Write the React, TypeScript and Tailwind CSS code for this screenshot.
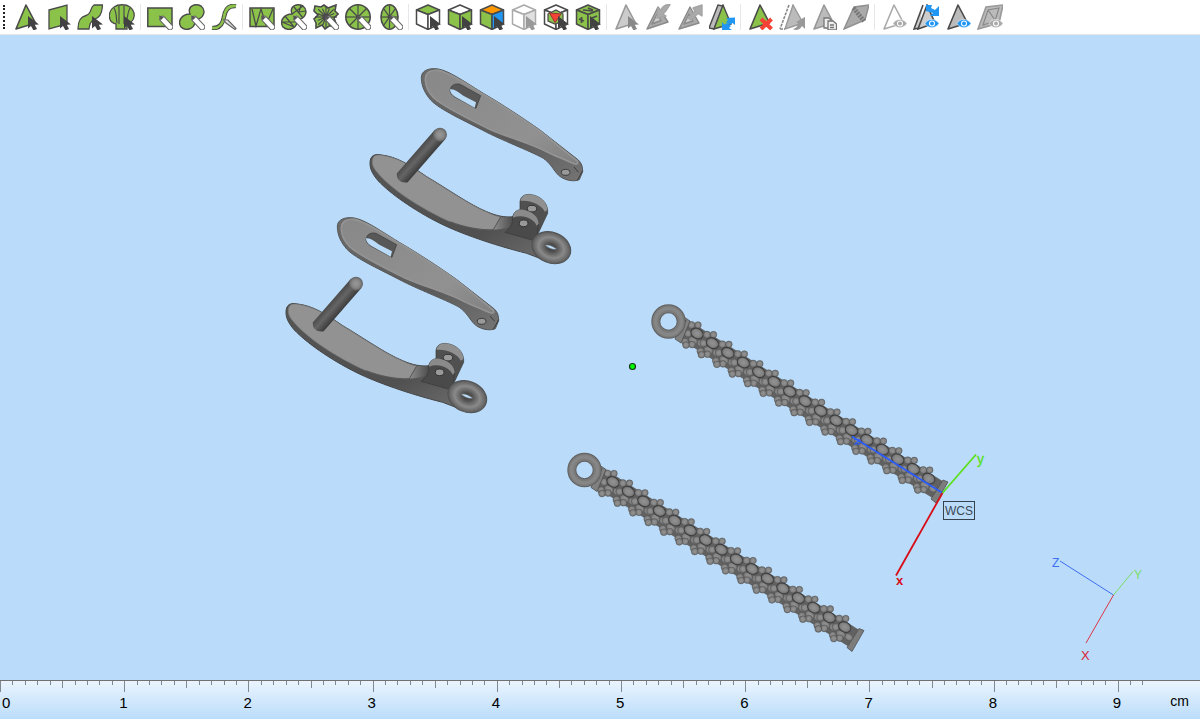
import { Fragment, type ReactNode } from 'react'

const GREEN = '#8bc34a'
const DARK = '#4a4a4a'

type Tool = { label: string; icon: ReactNode; disabled?: boolean }

function Cursor({ color = '#424242' }: { color?: string }) {
  return <path d="M15 12V24.5L18 22L20.500 26.500L24 25L21.800 20.700L26 20.500Z" fill={color} />
}

function Pencil() {
  return (
    <g>
      <path d="M15.500 15L23 23" stroke="#666" strokeWidth="6.500" strokeLinecap="round" />
      <path d="M15.500 15L23 23" stroke="#fff" strokeWidth="4.500" strokeLinecap="round" />
      <path d="M12 11.500L17 13L13.500 16.500Z" fill="#555" />
    </g>
  )
}

function Spokes({ cx, cy, rx, ry, turn = 0 }: { cx: number; cy: number; rx: number; ry: number; turn?: number }) {
  const angles = [0, 45, 90, 135].map((a) => ((a + turn) * Math.PI) / 180)
  return (
    <g stroke={DARK} strokeWidth="1.2">
      {angles.map((a) => (
        <line
          key={a}
          x1={cx - rx * Math.cos(a)}
          y1={cy - ry * Math.sin(a)}
          x2={cx + rx * Math.cos(a)}
          y2={cy + ry * Math.sin(a)}
        />
      ))}
    </g>
  )
}

function Cube({ top, left, right, line = DARK }: { top: string; left: string; right: string; line?: string }) {
  return (
    <g stroke={line} strokeWidth="1.5" strokeLinejoin="round">
      <path d="M13 1L24.500 6L13 10.500L1.500 6Z" fill={top} />
      <path d="M1.500 6L13 10.500V25.500L1.500 20Z" fill={left} />
      <path d="M24.500 6L13 10.500V25.500L24.500 20Z" fill={right} />
    </g>
  )
}

function Triangle({ fill = GREEN, line = DARK }: { fill?: string; line?: string }) {
  return <path d="M13 1L3 25L22.5 19Z" fill={fill} stroke={line} strokeWidth="1.6" strokeLinejoin="round" />
}

function Eye({ color }: { color: string }) {
  return (
    <g>
      <path d="M12 19.5C15 14 22.500 14 26 19.5C22.500 25 15 25 12 19.5Z" fill={color} stroke="#fff" strokeWidth=".5" />
      <circle cx="19" cy="19.5" r="3" fill="#fff" />
      <circle cx="19" cy="19.5" r="2" fill={color} />
    </g>
  )
}

const dumbbell = 'M11 10C8 2 16 -1 22 2C28 7 24 16 16 15C16 15 15 16 16 18C15 26 6 27 2 23C-2 17 3 10 11 10Z'

const groups: Tool[][] = [
  [
    { label: 'Select triangles', icon: <><Triangle /><Cursor /></> },
    { label: 'Select planes', icon: <><path d="M4 6L22 1V20L4 25Z" fill={GREEN} stroke={DARK} strokeWidth="1.3" /><Cursor /></> },
    { label: 'Select surfaces', icon: <><path d="M17 1H25.5C25 11 22 14 17 15.5C14 17 12.5 20 12 25H1C1 17 3 13 9 11.5C15 10 13 3 17 1Z" fill={GREEN} stroke={DARK} strokeWidth="1.3" /><Cursor /></> },
    {
      label: 'Select shells',
      icon: (
        <>
          <path d="M7 25V20C-2 18 -1 7 5 3C9 0 17 0 21 3C27 8 27 17 18 20V25Z" fill={GREEN} stroke={DARK} strokeWidth="1.3" />
          <path d="M5 4C8 9 7 14 8 19M10 2V20M15 2V20M21 4C18 9 19 14 17 19" fill="none" stroke={DARK} strokeWidth="1.2" />
          <Cursor />
        </>
      ),
    },
  ],
  [
    { label: 'Rectangle selection', icon: <><path d="M.8 4H25V22.5H.8Z" fill={GREEN} stroke={DARK} strokeWidth="1.5" /><Pencil /></> },
    { label: 'Freeform selection', icon: <><path d={dumbbell} fill={GREEN} stroke={DARK} strokeWidth="1.4" /><Pencil /></> },
    {
      label: 'Polyline selection',
      icon: (
        <>
          <path d="M1 24C10 25 12 18 13 13C14 6 17 1 25 2" fill="none" stroke={DARK} strokeWidth="4.500" />
          <path d="M1 24C10 25 12 18 13 13C14 6 17 1 25 2" fill="none" stroke={GREEN} strokeWidth="2.500" />
          <path d="M12.500 15.500L17 16L25 24.500L24 25.500L15 19Z" fill="#ddd" stroke="#666" strokeWidth="1.2" />
        </>
      ),
    },
  ],
  [
    {
      label: 'Rectangle through selection',
      icon: (
        <>
          <path d="M1 4H25V22.5H1Z" fill={GREEN} stroke={DARK} strokeWidth="1.5" />
          <path d="M3 5L7 22L12 5L17 21L24 5" fill="none" stroke={DARK} strokeWidth="1.3" />
          <Pencil />
        </>
      ),
    },
    {
      label: 'Freeform through selection',
      icon: (
        <>
          <path d={dumbbell} fill={GREEN} stroke={DARK} strokeWidth="1.4" />
          <path d="M13 3L22 14M18 8L20 1M18 8L25 7M11 10L22 2M1 18L13 23M1 18L15 18M4 12L13 23" fill="none" stroke={DARK} strokeWidth="1.2" />
          <Pencil />
        </>
      ),
    },
    {
      label: 'Star selection',
      icon: (
        <>
          <path d="M2 2L8 3L11 1L15 4L23 1L22 7L25 10L21 14L24 22L16 22L12 25L9 21L3 24L3 19L1 15L5 11L1 7Z" fill={GREEN} stroke={DARK} strokeWidth="1.6" />
          <Spokes cx={13} cy={13} rx={11} ry={11} />
          <Spokes cx={13} cy={13} rx={9} ry={9} turn={22} />
          <circle cx="13" cy="13" r="3.500" fill={DARK} />
          <Pencil />
        </>
      ),
    },
    {
      label: 'Circle selection',
      icon: <><circle cx="13" cy="13" r="12.200" fill={GREEN} stroke={DARK} strokeWidth="1.6" /><Spokes cx={13} cy={13} rx={12} ry={12} /><circle cx="13" cy="13" r="2" fill={DARK} /><Pencil /></>,
    },
    {
      label: 'Ellipse selection',
      icon: <><ellipse cx="12.500" cy="13" rx="8.500" ry="12.200" fill={GREEN} stroke={DARK} strokeWidth="1.6" /><Spokes cx={12.5} cy={13} rx={8} ry={11.5} /><circle cx="12.500" cy="13" r="2" fill={DARK} /><Pencil /></>,
    },
  ],
  [
    { label: 'Top view', icon: <><Cube top={GREEN} left="#fff" right="#fff" /><Cursor /></> },
    { label: 'Side view', icon: <><Cube top="#fff" left={GREEN} right={GREEN} /><Cursor /></> },
    { label: 'Coloured faces', icon: <><Cube top="#ff9800" left={GREEN} right="#2196f3" /><Cursor /></> },
    { label: 'Hidden part', disabled: true, icon: <><Cube top="#fff" left="#fff" right="#e0e0e0" line="#aaa" /><Cursor color="#999" /></> },
    {
      label: 'Inner part',
      icon: (
        <>
          <Cube top="#fff" left="#fff" right="#fff" />
          <path d="M5 10L13 6L20 10V17L12 20L5 17Z" fill={GREEN} stroke={DARK} strokeWidth="1.2" />
          <path d="M6.500 9L18 10L12 18.500Z" fill="#f44336" stroke="#933" />
          <Cursor />
        </>
      ),
    },
    {
      label: 'Whole part',
      icon: (
        <>
          <Cube top={GREEN} left={GREEN} right={GREEN} />
          <path d="M8 6L18 7M13 4L18 6" stroke={DARK} strokeWidth="1.6" />
          <path d="M4 15L9 17M6.500 13V19M17 14L22 12" stroke={DARK} strokeWidth="1.8" />
          <Cursor />
        </>
      ),
    },
  ],
  [
    { label: 'Mark triangle', disabled: true, icon: <><Triangle fill="#ccc" line="#999" /><Cursor color="#888" /></> },
    {
      label: 'Shrink selection',
      disabled: true,
      icon: (
        <g stroke="#8a8a8a" strokeWidth="1.4" strokeLinejoin="round">
          <path d="M13 3L2 25L23 18Z" fill="#aaa" />
          <path d="M12 10L7 20L16 16.5Z" fill="#ccc" />
          <path d="M12 14L13 4L15.500 6C18 2 20 .5 25 .5C22 5 21 8 18 10L21 12Z" fill="#aaa" stroke="#a5a5a5" />
        </g>
      ),
    },
    {
      label: 'Grow selection',
      disabled: true,
      icon: (
        <g stroke="#8a8a8a" strokeWidth="1.4" strokeLinejoin="round">
          <path d="M13 3L2 25L22 19Z" fill="#aaa" />
          <path d="M12 10L7 20L16 17Z" fill="#ccc" />
          <path d="M11 14L18 7L16 4L25 1V12L21 9.500L14 16Z" fill="#aaa" stroke="#a5a5a5" />
        </g>
      ),
    },
    {
      label: 'Invert selection',
      icon: (
        <>
          <path d="M9 1L0 24L5 25L14 2Z" fill="#bbb" stroke={DARK} strokeWidth="1.4" />
          <path d="M14 1L5 25L22 20Z" fill={GREEN} stroke={DARK} strokeWidth="1.4" />
          <path d="M17 14L26 13.500V21L23.500 19L21 21L17 18L19 16Z" fill="#2196f3" />
          <path d="M13 18L15.500 20.500L18 19L22 22L20 24L23 26H13Z" fill="#2196f3" />
        </>
      ),
    },
  ],
  [
    { label: 'Delete marked', icon: <><Triangle /><path d="M14 15L24.500 25M24.500 15L14 25" stroke="#f44336" strokeWidth="4" /></> },
    {
      label: 'Move marked',
      disabled: true,
      icon: (
        <>
          <path d="M10 1L1 25M1 25H6" stroke="#888" strokeWidth="1.6" strokeDasharray="3 1" />
          <path d="M14 1L6 25L24 19Z" fill="#bbb" stroke="#999" strokeWidth="1.4" />
          <path d="M14 25C18 24 19 21 19 19L17 18L26 13V25L23 22C21 26 17 27 14 25Z" fill="#999" />
        </>
      ),
    },
    {
      label: 'Copy marked',
      disabled: true,
      icon: <><Triangle fill="#bbb" line="#999" /><g fill="#eee" stroke="#777" strokeWidth="1.3"><path d="M13 14H18L20 16V24H13Z" /><path d="M17 17H22L25.500 20V26H17Z" /><path d="M19 21H23M19 23.500H23" /></g></>,
    },
    {
      label: 'Stitch marked',
      disabled: true,
      icon: <><path d="M1 25L11 3L26 1L22 16Z" fill="#aaa" stroke="#8f8f8f" strokeWidth="1.4" /><path d="M10.500 4L21 17" stroke="#777" strokeWidth="4.500" strokeDasharray="2 1" /></>,
    },
  ],
  [
    { label: 'Hide marked', disabled: true, icon: <><Triangle fill="#fff" line="#aaa" /><Eye color="#aaa" /></> },
    {
      label: 'Invert visibility',
      icon: (
        <>
          <path d="M10 1L1 25L6 24M14 1L5 25L22 19Z" fill="#ccc" stroke={DARK} strokeWidth="1.6" />
          <path d="M13 1H19L18 4L22 6L26 2V12H17L20 9L13 7Z" fill="#2196f3" />
          <Eye color="#2196f3" />
        </>
      ),
    },
    { label: 'Show marked', icon: <><Triangle fill="#bbb" /><Eye color="#2196f3" /></> },
    {
      label: 'Show all',
      disabled: true,
      icon: (
        <>
          <path d="M1 25L9 3L26 1L22 19Z" fill="#bbb" stroke="#999" strokeWidth="1.6" />
          <path d="M6 21L11 6L22 4L18 17ZM11 6L18 16" fill="#bbb" stroke="#888" strokeWidth="1.2" />
          <Eye color="#aaa" />
        </>
      ),
    },
  ],
]

function Toolbar() {
  return (
    <header className="flex h-[35px] items-center overflow-hidden border-b border-gray-200 bg-white">
      <div className="mr-[5px] ml-[3px] h-6 border-l-2 border-dotted border-[#222]" />
      {groups.map((tools, i) => (
        <Fragment key={i}>
          {i > 0 && <div className="mr-[3px] ml-[2px] h-[26px] w-px shrink-0 bg-gray-200" />}
          {tools.map((tool) => (
            <button key={tool.label} type="button" aria-label={tool.label} disabled={tool.disabled} className="flex h-8 w-8 shrink-0 items-center justify-center">
              <svg viewBox="0 0 26 26" className="h-[26px] w-[26px]" fill="none">
                {tool.icon}
              </svg>
            </button>
          ))}
        </Fragment>
      ))}
    </header>
  )
}

function Clasp() {
  return (
    <g transform="translate(360 55) scale(.3333)">
      {/* lever */}
      <path d="M184 70C182 45 210 38 235 42C270 48 320 85 370 115C430 150 490 190 540 225L655 315C665 324 668 335 668 350L658 374C640 382 610 375 595 360C580 345 572 325 550 310C520 292 440 262 380 232C320 200 240 165 212 135C195 115 185 95 184 70Z" fill="url(#side)" stroke="#555" strokeWidth="3" />
      <path d="M196 75C196 50 215 44 235 46C270 52 320 88 370 118C430 153 490 193 540 228L652 318C657 332 645 328 628 320C608 310 587 304 560 290C510 265 438 245 385 221C320 189 250 155 221 128C203 110 197 93 196 75Z" fill="url(#face)" stroke="#949494" strokeWidth="5" />
      <path d="M272 100C275 88 290 85 300 88L362 122L348 160L283 125C271 116 268 108 272 100Z" fill="#585858" stroke="#3a3a3a" strokeWidth="2" />
      <path d="M270 103C285 102 295 112 310 122L348 142L344 158L285 125C275 119 270 111 270 103Z" fill="#badcf9" />
      <path d="M642 336L656 352M668 347L652 376" stroke="#3c3c3c" strokeWidth="3" />
      <ellipse cx="617" cy="352" rx="13" ry="9" fill="#999" stroke="#3a3a3a" strokeWidth="3" />

      {/* curved arm */}
      <path d="M30 325C30 300 45 296 65 300C110 305 150 330 200 365C260 400 330 450 380 470C410 483 435 488 460 485L530 545L545 612L500 595C400 570 300 535 240 505C160 465 90 415 55 378C35 355 30 340 30 325Z" fill="url(#under)" stroke="#444" strokeWidth="3" />
      <path d="M37 316C40 299 52 299 65 301C110 306 150 331 200 366C260 401 330 451 380 471C395 478 410 484 422 486L400 524C370 528 310 516 270 500C180 460 90 400 50 350C40 339 36 330 37 316Z" fill="#929292" stroke="#777" strokeWidth="2" />
      <path d="M422 486L462 487C458 510 450 522 400 524Z" fill="url(#bend)" />
      <path d="M422 486L400 524C360 526 310 516 270 500" fill="none" stroke="#444" strokeWidth="2" />

      {/* pin */}
      <path d="M224 225L111 355C107 375 125 386 143 382L257 251Z" fill="url(#pin)" />
      <circle cx="240" cy="239" r="21" fill="url(#ball)" />

      {/* hinge */}
      <path d="M480 440C482 420 500 415 520 420C550 428 565 450 563 475L524 558L480 500Z" fill="#505050" stroke="#3a3a3a" strokeWidth="2" />
      <path d="M482 438C484 420 502 416 520 420C545 427 562 443 562 465L554 470C545 450 510 435 482 438Z" fill="#909090" />
      <ellipse cx="516" cy="461" rx="14" ry="10" fill="#999" stroke="#333" strokeWidth="3" />
      <path d="M458 490C458 470 475 461 492 464C518 470 537 485 536 512L526 558L435 532C450 520 458 510 458 490Z" fill="#4a4a4a" stroke="#3a3a3a" strokeWidth="2" />
      <path d="M459 488C460 468 475 461 492 464C518 470 536 485 536 506L530 512C522 492 490 476 459 488Z" fill="#8a8a8a" />
      <ellipse cx="491" cy="505" rx="13" ry="10" fill="#999" stroke="#333" strokeWidth="3" />

      {/* end ring */}
      <ellipse cx="574" cy="578" rx="60" ry="46" transform="rotate(22 574 578)" fill="url(#ring)" stroke="#505050" strokeWidth="3" />
      <path d="M556 571C565 567 580 574 590 582C580 586 566 580 556 571Z" fill="#badcf9" stroke="#666" strokeWidth="2" />
    </g>
  )
}

const links = Array.from({ length: 16 }, (_, i) => ({ x: 697 + i * 15.45, y: 333.5 + i * 9.67 }))

function Chain() {
  return (
    <g>
      <path d="M688 320L944 482L934 499L680 339Z" fill="#616161" />
      {links.map(({ x, y }) => (
        <g key={x} transform={`translate(${x} ${y})`} fill="url(#bead)" stroke="#565656" strokeWidth=".5">
          <circle cx="-5.500" cy="-8.500" r="3.600" />
          <circle cx="1" cy="-8.500" r="3.300" />
          <ellipse cx="4" cy="10" rx="4.500" ry="3.400" transform="rotate(32 4 10)" />
          <ellipse cx="-4" cy="7" rx="5" ry="3.500" transform="rotate(32 -4 7)" />
          <circle cx="-12" cy="8" r="3.500" />
          <circle cx="-5" cy="11" r="3.400" />
          <circle cx="-11" cy="11.500" r="3.400" />
          <circle cx="-9" cy="0" r="3.700" />
          <ellipse rx="6.500" ry="5" transform="rotate(28)" stroke="#3a3a3a" strokeWidth=".9" />
        </g>
      ))}
      <path d="M943 480L948 482L936 503L931 499Z" fill="#7c7c7c" stroke="#505050" strokeWidth=".8" />
      <path d="M684 317L690 321L681 343L675 339Z" fill="#808080" stroke="#505050" strokeWidth=".8" />
      <path d="M686 320L678 335" stroke="#333" />
      <circle cx="668.5" cy="321.5" r="12.7" fill="none" stroke="#606060" strokeWidth="9" />
      <circle cx="668.5" cy="321.5" r="12.7" fill="none" stroke="#7a7a7a" strokeWidth="7" />
      <circle cx="668.5" cy="321.5" r="13" fill="none" stroke="#868686" strokeWidth="3.5" />
    </g>
  )
}

function Viewport() {
  return (
    <svg viewBox="0 35 1200 645" className="w-full flex-1 font-['Liberation_Sans',Arial,sans-serif]" role="img" aria-label="3D model">
      <defs>
        <linearGradient id="face" x1="0" y1="0" x2="1" y2="1">
          <stop offset="0" stopColor="#888" />
          <stop offset=".7" stopColor="#919191" />
          <stop offset="1" stopColor="#808080" />
        </linearGradient>
        <linearGradient id="side" x1="0" y1="0" x2="1" y2="1">
          <stop offset="0" stopColor="#6c6c6c" />
          <stop offset=".6" stopColor="#5a5a5a" />
          <stop offset="1" stopColor="#747474" />
        </linearGradient>
        <linearGradient id="under" x1="0" y1="0" x2="1" y2="1">
          <stop offset="0" stopColor="#555" />
          <stop offset=".7" stopColor="#505050" />
          <stop offset="1" stopColor="#6b6b6b" />
        </linearGradient>
        <linearGradient id="bend">
          <stop offset="0" stopColor="#8d8d8d" />
          <stop offset="1" stopColor="#4a4a4a" />
        </linearGradient>
        <linearGradient id="pin" gradientUnits="userSpaceOnUse" x1="165" y1="285" x2="200" y2="316">
          <stop offset="0" stopColor="#444" />
          <stop offset=".5" stopColor="#656565" />
          <stop offset="1" stopColor="#3c3c3c" />
        </linearGradient>
        <radialGradient id="ball">
          <stop offset="0" stopColor="#999" />
          <stop offset=".6" stopColor="#868686" />
          <stop offset="1" stopColor="#606060" />
        </radialGradient>
        <radialGradient id="bead">
          <stop offset="0" stopColor="#939393" />
          <stop offset=".65" stopColor="#848484" />
          <stop offset="1" stopColor="#666" />
        </radialGradient>
        <radialGradient id="ring">
          <stop offset=".2" stopColor="#484848" />
          <stop offset=".65" stopColor="#8a8a8a" />
          <stop offset="1" stopColor="#5a5a5a" />
        </radialGradient>
      </defs>

      <Clasp />
      <g transform="translate(-84 149)">
        <Clasp />
      </g>
      <Chain />
      <g transform="translate(-84 148.5)">
        <Chain />
      </g>

      <circle cx="632.5" cy="366.5" r="3" fill="#0f0" stroke="#143c14" strokeWidth="1.2" />

      {/* work coordinate system */}
      <g fill="none" strokeWidth="1.8">
        <path d="M942.5 493L852 436.5" stroke="#2b5cff" />
        <path d="M854 439L860 440L855 444H860" stroke="#2b5cff" strokeWidth="1.2" />
        <path d="M942.5 493L976 454.5" stroke="#5be01c" />
        <path d="M942.5 493L896 575.5" stroke="#d80d18" />
      </g>
      <text x="977" y="464" fontSize="14" fill="#5be01c" stroke="#5be01c" strokeWidth=".3">y</text>
      <text x="896" y="585" fontSize="13" fontWeight="bold" fill="#d80d18">x</text>
      <rect x="943.5" y="501.5" width="31" height="18" fill="none" stroke="#35414d" />
      <text x="945" y="515" fontSize="12" fill="#3c4854">WCS</text>

      {/* orientation axes */}
      <g fill="none">
        <path d="M1113.5 595L1060 561" stroke="#3c6ff0" />
        <path d="M1113.5 595L1133 571.5" stroke="#79dd63" />
        <path d="M1113.5 595L1086 643" stroke="#dc3545" />
      </g>
      <text x="1052" y="567" fontSize="12" fill="#3c6ff0">Z</text>
      <text x="1134" y="579" fontSize="12" fill="#79dd63">Y</text>
      <text x="1081" y="660" fontSize="13" fill="#dc2335">X</text>
    </svg>
  )
}

function Ruler() {
  return (
    <footer className="flex h-[39px] overflow-hidden border-t border-[#707070] bg-gradient-to-b from-[#eaf4fe] to-[#bbddfa] font-['Liberation_Sans',Arial,sans-serif] text-[15px] leading-4 text-black">
      {Array.from({ length: 9 }, (_, cm) => (
        <div key={cm} className="min-w-0 grow-[124] basis-0">
          <div className="grid h-[14px] grid-cols-10">
            {Array.from({ length: 10 }, (_, mm) => (
              <div key={mm} className={`border-l border-[#808890] ${mm === 0 ? 'h-[11px]' : mm === 5 ? 'h-[7px]' : 'h-1'}`} />
            ))}
          </div>
          <div className={cm === 0 ? 'ml-[2px]' : '-ml-[5px]'}>{cm}</div>
        </div>
      ))}
      <div className="min-w-0 grow-[82] basis-0">
        <div className="flex h-[14px]">
          <div className="h-[11px] w-3 border-l border-[#808890]" />
          <div className="h-1 w-3 border-l border-[#808890]" />
          <div className="h-1 w-3 border-l border-[#808890]" />
        </div>
        <div className="flex justify-between pr-[11px]">
          <span className="-ml-[5px]">9</span>
          <span className="-mt-[2px] text-sm leading-4">cm</span>
        </div>
      </div>
    </footer>
  )
}

export default function App() {
  return (
    <div className="flex min-h-screen flex-col bg-[#badcfa]">
      <Toolbar />
      <Viewport />
      <Ruler />
    </div>
  )
}
